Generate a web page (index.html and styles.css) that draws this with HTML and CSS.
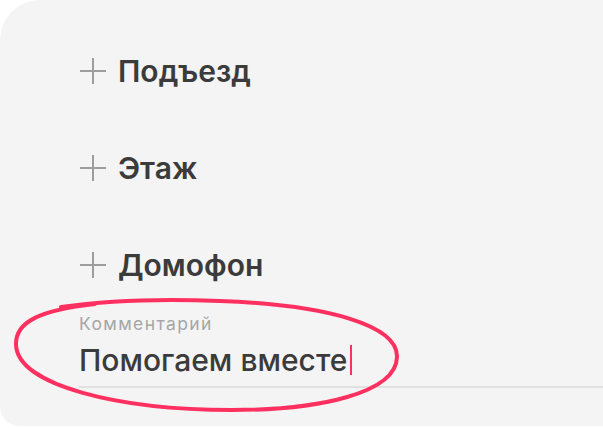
FILE: index.html
```html
<!DOCTYPE html>
<html lang="ru">
<head>
    <meta charset="UTF-8">
    <meta name="viewport" content="width=device-width, initial-scale=1.0">
    <title>Адрес доставки</title>
    <link rel="stylesheet" href="styles.css">
</head>
<body>
    <div class="card">
        <!-- дополнительные поля адреса -->
        <div class="add-row">
            <svg class="plus" viewBox="0 0 28 28"><path d="M14 1v26M1 14h26"/></svg>
            <span class="add-label">Подъезд</span>
        </div>
        <div class="add-row">
            <svg class="plus" viewBox="0 0 28 28"><path d="M14 1v26M1 14h26"/></svg>
            <span class="add-label">Этаж</span>
        </div>
        <div class="add-row">
            <svg class="plus" viewBox="0 0 28 28"><path d="M14 1v26M1 14h26"/></svg>
            <span class="add-label">Домофон</span>
        </div>

        <div class="field">
            <label class="field-label">Комментарий</label>
            <div class="field-value">Помогаем вместе<span class="caret"></span></div>
        </div>

        <!-- пометка поверх поля -->
        <svg class="mark" viewBox="0 0 603 428">
            <path d="M61 307 C110 300 170 299 220 301 C330 305 398 326 397 357 C396 393 320 410 232 410 C120 410 18 386 16 345 C15 322 40 310 95 304"/>
        </svg>
    </div>
</body>
</html>
```

FILE: styles.css
```css
* {
    margin: 0;
    padding: 0;
    box-sizing: border-box;
}

body {
    background-color: #fff;
    font-family: Inter, Roboto, sans-serif;
    color: #3b3b3b;
}

/* Карточка */
.card {
    position: relative;
    height: 426px;
    background-color: #f4f4f4;
    border-radius: 40px 0 0 20px;
    padding: 22px 0 0 79px;
}

.add-row {
    display: flex;
    align-items: center;
    gap: 11px;
    height: 97px;
}

.plus {
    width: 28px;
    height: 28px;
    flex-shrink: 0;
}

.plus path {
    stroke: #9d9d9d;
    stroke-width: 2;
    fill: none;
}

.add-label {
    font-size: 30px;
    font-weight: 600;
    line-height: 34px;
}

/* Поле комментария */
.field {
    border-bottom: 2px solid #e1e1e1;
    padding-top: 1px;
    padding-bottom: 6px;
}

.field-label {
    display: block;
    font-size: 17.5px;
    letter-spacing: 1.4px;
    line-height: 20px;
    color: #a6a6a6;
}

.field-value {
    display: flex;
    align-items: center;
    font-size: 30px;
    font-weight: 500;
    line-height: 40px;
    margin-top: 6px;
}

.caret {
    width: 2px;
    height: 30px;
    margin-left: 3px;
    background-color: #fe3060;
}

.mark {
    position: absolute;
    left: 0;
    top: 0;
    width: 603px;
    height: 428px;
    pointer-events: none;
}

.mark path {
    fill: none;
    stroke: #fe3060;
    stroke-width: 4;
    stroke-linecap: round;
}
```
